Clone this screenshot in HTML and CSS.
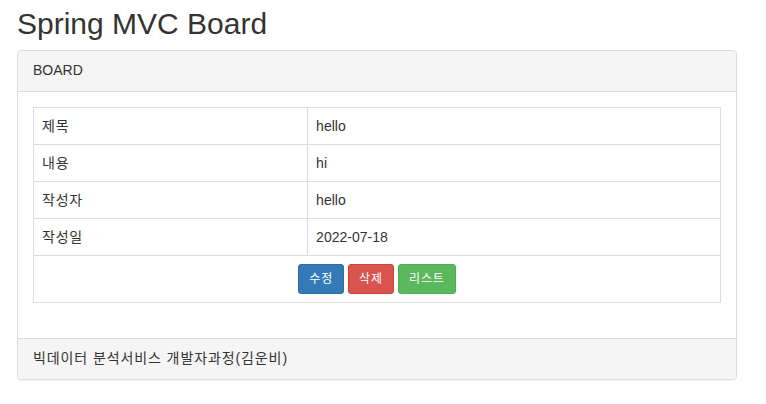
FILE: index.html
```html
<!DOCTYPE html>
<html lang="ko">
<head>
<meta charset="utf-8">
<title>Spring MVC Board</title>
<link rel="stylesheet" href="styles.css">
</head>
<body>
<div class="container">
  <h2 class="title">Spring MVC Board</h2>
  <div class="panel">
    <div class="panel-heading">BOARD</div>
    <div class="panel-body">
      <table class="table">
        <tr><td class="label">제목</td><td>hello</td></tr>
        <tr><td class="label">내용</td><td>hi</td></tr>
        <tr><td class="label">작성자</td><td>hello</td></tr>
        <tr><td class="label">작성일</td><td>2022-07-18</td></tr>
        <tr>
          <td colspan="2" class="actions">
            <button class="btn btn-primary">수정</button>
            <button class="btn btn-danger">삭제</button>
            <button class="btn btn-success">리스트</button>
          </td>
        </tr>
      </table>
    </div>
    <div class="panel-footer">빅데이터 분석서비스 개발자과정(김운비)</div>
  </div>
</div>
</body>
</html>
```
FILE: styles.css
```css
* { box-sizing: border-box; }
html, body { margin: 0; padding: 0; background: #fff; }
body {
  font-family: "Liberation Sans", Arial, "Noto Sans CJK KR", sans-serif;
  font-size: 14px;
  line-height: 1.42857;
  color: #333;
}
.container {
  padding: 0 29px 0 17px;
}
.title {
  font-size: 30px;
  font-weight: 500;
  line-height: 1.1;
  margin: 7px 0 10px;
  color: #333;
}
.panel {
  border: 1px solid #ddd;
  border-radius: 4px;
  background: #fff;
  box-shadow: 0 1px 1px rgba(0,0,0,.05);
  margin-bottom: 20px;
}
.panel-heading {
  background: #f5f5f5;
  border-bottom: 1px solid #ddd;
  border-radius: 3px 3px 0 0;
  padding: 10px 15px;
  color: #333;
}
.panel-body {
  padding: 15px;
}
.panel-footer {
  background: #f5f5f5;
  border-top: 1px solid #ddd;
  border-radius: 0 0 3px 3px;
  padding: 10px 15px;
  letter-spacing: 0.9px;
}
.table {
  width: 100%;
  border-collapse: collapse;
  border: 1px solid #ddd;
  margin-bottom: 20px;
}
.table td {
  border: 1px solid #ddd;
  padding: 8px;
  line-height: 20px;
  vertical-align: top;
}
.table td.label { width: 39.9%; letter-spacing: 0.8px; }
.table td.actions {
  text-align: center;
  font-size: 0;
}
.btn {
  display: inline-block;
  font-family: "Liberation Sans", Arial, "Noto Sans CJK KR", sans-serif;
  font-size: 12px;
  line-height: 18px;
  padding: 5px 10px;
  border: 1px solid transparent;
  border-radius: 3px;
  color: #fff;
  margin: 0 2px;
  letter-spacing: 0.9px;
  cursor: pointer;
}
.btn-primary { background: #337ab7; border-color: #2e6da4; }
.btn-danger { background: #d9534f; border-color: #d43f3a; }
.btn-success { background: #5cb85c; border-color: #4cae4c; }
```
